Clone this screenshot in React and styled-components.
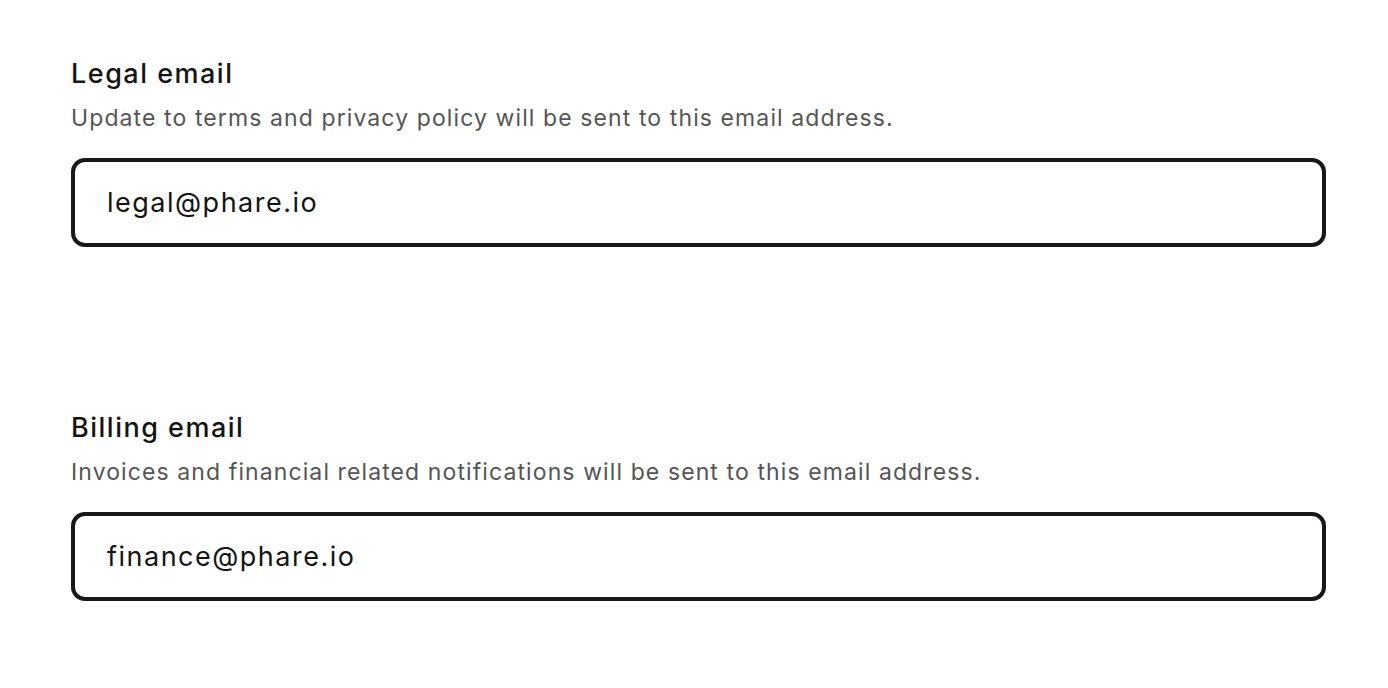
import React from "react";
import styled, { createGlobalStyle } from "styled-components";

const GlobalStyle = createGlobalStyle`
  html, body {
    margin: 0;
    padding: 0;
    background: #ffffff;
    font-family: "Inter", "Noto Sans", sans-serif;
  }
`;

const Page = styled.div`
  display: flex;
  flex-direction: column;
  gap: 163px;
  padding: 56px 62px 0 71px;
`;

const Field = styled.section`
  display: flex;
  flex-direction: column;
`;

const Title = styled.label`
  font-size: 27px;
  line-height: 36px;
  font-weight: 500;
  letter-spacing: 1.5px;
  color: #141414;
`;

const Hint = styled.p`
  margin: 10px 0 24px;
  font-size: 23px;
  line-height: 32px;
  letter-spacing: 1.1px;
  color: #555555;
`;

const Input = styled.input`
  box-sizing: border-box;
  width: 100%;
  height: 89px;
  padding: 0 32px;
  border: 4px solid #181818;
  border-radius: 14px;
  font-family: inherit;
  font-size: 27px;
  letter-spacing: 1.5px;
  color: #141414;
  background: #ffffff;
  outline: none;
`;

const fields = [
  {
    id: "legal",
    title: "Legal email",
    hint: "Update to terms and privacy policy will be sent to this email address.",
    value: "legal@phare.io",
  },
  {
    id: "billing",
    title: "Billing email",
    hint: "Invoices and financial related notifications will be sent to this email address.",
    value: "finance@phare.io",
  },
];

const App = () => (
  <>
    <GlobalStyle />
    <Page>
      {fields.map(({ id, title, hint, value }) => (
        <Field key={id}>
          <Title htmlFor={id}>{title}</Title>
          <Hint>{hint}</Hint>
          <Input id={id} type="email" defaultValue={value} />
        </Field>
      ))}
    </Page>
  </>
);

export default App;
